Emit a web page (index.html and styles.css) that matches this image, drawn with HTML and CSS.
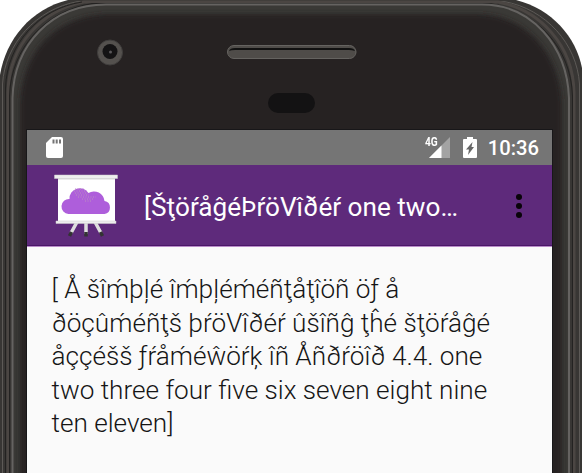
FILE: index.html
```html
<!DOCTYPE html>
<html lang="en">
<head>
<meta charset="utf-8">
<title>StorageProvider</title>
<link rel="stylesheet" href="styles.css">
</head>
<body>
<div class="phone">
  <svg class="shell" viewBox="0 0 582 473" aria-hidden="true">
    <defs>
      <filter id="soft" x="-10%" y="-10%" width="120%" height="120%"><feGaussianBlur stdDeviation="2.6"/></filter>
      <clipPath id="body"><path d="M0 473V75C6 39 31 9 68 0H516C552 9 576 37 582 68V473Z"/></clipPath>
    </defs>
    <g clip-path="url(#body)">
    <path fill="#383634" d="M0 0H582V473H0Z"/>
    <path fill="none" stroke="#5d5a57" stroke-width="1" d="M2.500 473V84C5 44 36 9 78 1.500H504C546 9 577 44 579.500 84V473"/>
    <path fill="none" stroke="#4b4643" stroke-width="3" d="M8 473V92C9 45 42 10 84 2H498C540 10 573 45 574 92V473"/>
    <path fill="none" stroke="#232221" stroke-width="1" d="M5.500 473V88C7 44 38 9 82 2M9.500 473V96C11 47 46 11 92 3.500H490C536 11 571 47 572.500 96V473"/>
    <path fill="#3a3936" stroke="#656361" stroke-width="2" d="M12.500 473V98C14 44 52 4.500 106 4.500H482C532 4.500 567 46 569 98V473"/>
    <path fill="#252223" filter="url(#soft)" d="M20 490V104C22 50 58 14 110 14H476C526 14 560 54 562 104V490Z"/>
    </g>
    <circle cx="110" cy="52.500" r="12.500" fill="#54514e" stroke="#403e3d"/>
    <circle cx="110" cy="51.500" r="7.500" fill="#141314"/>
    <circle cx="110.500" cy="52" r="1.500" fill="#5a585a"/>
    <rect x="227.500" y="45.500" width="128.500" height="13" rx="6.500" fill="#4f4c49" stroke="#656360"/>
    <path d="M229 51q1-3 6-3h114q5 0 6 3q-3-1-6-1H235q-4 0-6 1Z" fill="#111"/>
    <rect x="268" y="93" width="47" height="20" rx="10" fill="#131213"/>
  </svg>
  <main class="screen">
    <div class="status">
      <svg class="sd" viewBox="0 0 17 21"><path fill="#fff" d="M6 0h9q2 0 2 2v17q0 2-2 2H2q-2 0-2-2V6Z"/><path stroke="#757575" stroke-width="2" d="M7.500 2.500v4M10.700 2.500v4M14 2.500v4"/></svg>
      <div class="signal">
        <span class="net">4G</span>
        <svg class="bars" viewBox="0 0 21 21"><path fill="#a3a3a3" d="M21 0v21H0Z"/><path fill="#fff" d="M12.500 8.500V21H0Z"/></svg>
      </div>
      <svg class="battery" viewBox="0 0 14 21"><path fill="#fff" d="M4 0h6v2h3q1 0 1 1v17q0 1-1 1H1q-1 0-1-1V3q0-1 1-1h3Z"/><path fill="#666" d="M9.500 5l-1 5H11L5 18l1-5.500H3Z"/></svg>
      <span class="clock">10:36</span>
    </div>
    <header class="toolbar">
      <svg class="logo" viewBox="0 0 64 64">
        <path stroke="#dedede" stroke-width="3.500" d="M23 48L17 59M32 48v12M41 48l6 11"/>
        <path stroke="#333" stroke-width="3.500" d="M17.500 58l-2 4M32 58v4.500M46.500 58l2 4"/>
        <path fill="#fff" d="M4 4h57v45H4Z"/>
        <path fill="#dadada" d="M4 4h57v1.500H4Z"/>
        <path fill="#eee" stroke="#ccc" stroke-width=".5" d="M.5 1h63v3.500H.5ZM2 47h60v2.500H2Z"/>
        <path fill="#ae5edb" d="M14.500 40A7.500 7.500 0 0 1 15.500 25A10.300 10.300 0 0 1 34.500 19A10.500 10.500 0 0 1 50.500 27A6.600 6.600 0 0 1 50.500 40Z"/>
        <path stroke="#bb91bf" stroke-width="1" stroke-dasharray="1 1.500" d="M21 15h10M20 17h13M21 19h13M22 21h13M24 23h18M28 25h11M31 27h6"/>
      </svg>
      <h1 class="title">[ŠţöŕåĝéÞŕöVîðéŕ one two…</h1>
      <svg class="more" viewBox="0 0 6 26"><circle cx="3" cy="4" r="3"/><circle cx="3" cy="13" r="3"/><circle cx="3" cy="22" r="3"/></svg>
    </header>
    <p class="intro">
      <span>[ Å šîḿþļé îḿþļéḿéñţåţîöñ öƒ å</span>
      <span>ðöçûḿéñţš þŕöVîðéŕ ûšîñĝ ţĥé šţöŕåĝé</span>
      <span>åççéšš ƒŕåḿéŵöŕķ îñ Åñðŕöîð 4.4. one</span>
      <span>two three four five six seven eight nine</span>
      <span>ten eleven]</span>
    </p>
  </main>
</div>
</body>
</html>
```
FILE: styles.css
```css
body { margin: 0; background: #fff; overflow: hidden; font-family: Roboto, "Liberation Sans", sans-serif; }
.phone { position: relative; box-sizing: border-box; width: 582px; height: 473px; padding: 130px 30px 0 27px; overflow: hidden; }
.shell { position: absolute; inset: 0; width: 582px; height: 473px; }
.screen { position: relative; height: 343px; background: #fafafa; box-shadow: 0 0 0 1px #181719; }
.status { display: flex; align-items: center; box-sizing: border-box; height: 35px; padding: 0 13px 0 19px; background: #757575; color: #fff; }
.sd { width: 17px; height: 21px; margin-right: auto; }
.signal { display: flex; align-items: flex-start; }
.net { margin-right: -12.5px; font: 700 13px/10px "Roboto", sans-serif; transform: scaleX(.78); transform-origin: 0 0; }
.bars { width: 21px; height: 21px; }
.battery { width: 14px; height: 21px; margin: 0 11px 0 13px; }
.clock { font-size: 20.2px; font-weight: 500; line-height: 35px; padding-top: 1px; }
.toolbar { display: flex; align-items: center; box-sizing: border-box; height: 82px; padding: 0 30px 0 27px; background: #5e2a7b; border-bottom: 1px solid #b98bc9; box-shadow: inset 0 -1px #4a1668; }
.logo { width: 64px; height: 64px; margin-right: 26px; fill: none; }
.title { margin: 0 auto 0 0; color: #fff; font-size: 26.15px; font-weight: 400; line-height: 36px; padding-top: 3px; white-space: nowrap; }
.more { width: 6px; height: 26px; fill: #090409; }
.intro { margin: 26px 0 0 24.5px; color: #151515; font-size: 26.15px; font-weight: 300; line-height: 33.5px; white-space: nowrap; }
.intro span { display: block; width: max-content; }
```
